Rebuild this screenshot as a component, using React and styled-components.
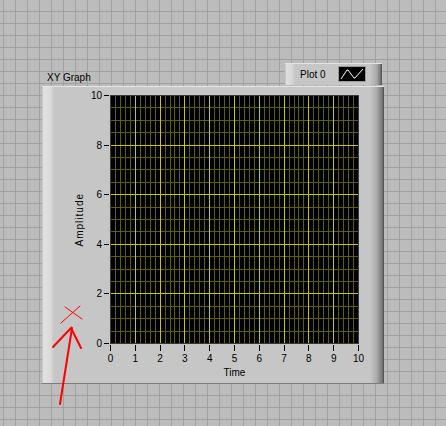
import React from 'react';
import styled, { createGlobalStyle } from 'styled-components';

const GlobalStyle = createGlobalStyle`
  html, body {
    margin: 0;
    padding: 0;
  }
  body {
    width: 446px;
    height: 426px;
    overflow: hidden;
    background-color: #bcbcbc;
    background-image:
      linear-gradient(#a0a0a0 1px, transparent 1px),
      linear-gradient(90deg, #a0a0a0 1px, transparent 1px);
    background-size: 12px 12px;
    background-position: 3px 11px;
    font-family: "Liberation Sans", Arial, sans-serif;
    font-size: 10px;
    color: #000;
  }
`;

const Page = styled.div`
  position: relative;
  width: 446px;
  height: 426px;
  padding: 63px 0 0 42px;
  box-sizing: border-box;
`;

const Control = styled.div`
  width: 342px;
  display: flex;
  flex-direction: column;
`;

const Header = styled.div`
  height: 23px;
  display: flex;
  justify-content: space-between;
  align-items: flex-start;
`;

const Caption = styled.span`
  margin: 9px 0 0 5px;
  line-height: 11px;
`;

const Legend = styled.div`
  width: 97px;
  height: 22px;
  margin-right: 2px;
  box-sizing: border-box;
  display: flex;
  align-items: center;
  padding-left: 15px;
  background: linear-gradient(to right, #b0b0b0 0px, #e0e0e0 1px, #d6d6d6 7px, #c6c6c6 10px,
    #c6c6c6 calc(100% - 12px), #a6a6a6 calc(100% - 5px), #6a6a6a calc(100% - 1px), #444 100%);
  box-shadow: inset 0 1px 0 #e4e4e4;
`;

const LegendName = styled.span`
  width: 38px;
  line-height: 11px;
`;

const LegendIcon = styled.svg`
  display: block;
  width: 28px;
  height: 16px;
  background: #000;
  box-sizing: border-box;
  border: 1px solid #9a9a9a;
`;

const Frame = styled.div`
  height: 298px;
  box-sizing: border-box;
  display: flex;
  padding: 9px 0 0 30px;
  background: linear-gradient(to right, #acacac 0px, #e2e2e2 1px, #d9d9d9 9px, #c6c6c6 12px,
    #c6c6c6 calc(100% - 14px), #a9a9a9 calc(100% - 7px), #6c6c6c calc(100% - 1px), #3e3e3e 100%);
  box-shadow: inset 0 1px 0 #e6e6e6, inset 0 -1px 0 #7c7c7c;
`;

const YTitle = styled.div`
  width: 16px;
  height: 249px;
  display: flex;
  align-items: center;
  justify-content: center;
`;

const YTitleText = styled.span`
  writing-mode: vertical-rl;
  transform: rotate(180deg);
  line-height: 12px;
  letter-spacing: 1px;
`;

const YAxis = styled.div`
  width: 22px;
  height: 249px;
  display: flex;
  flex-direction: column;
  justify-content: space-between;
  padding: 0.5px 0;
  box-sizing: border-box;
`;

const YTick = styled.div`
  height: 0;
  display: flex;
  align-items: center;
  justify-content: flex-end;
`;

const YTickMark = styled.span`
  width: 5px;
  height: 1px;
  margin: 0 1px 0 2px;
  background: #000;
`;

const PlotColumn = styled.div`
  width: 249px;
  display: flex;
  flex-direction: column;
`;

const Plot = styled.svg`
  display: block;
  width: 249px;
  height: 249px;
  background: #000;
`;

const XAxis = styled.div`
  display: flex;
  justify-content: space-between;
  padding: 0 0.5px;
  height: 18px;
`;

const XTick = styled.div`
  width: 0;
  display: flex;
  flex-direction: column;
  align-items: center;
`;

const XTickMark = styled.span`
  width: 1px;
  height: 6px;
  margin-top: 1px;
  flex: none;
  background: #000;
`;

const XTickLabel = styled.span`
  margin-top: 3px;
  line-height: 9px;
`;

const XTitle = styled.div`
  text-align: center;
  line-height: 11px;
  margin-top: 5px;
`;

const Annotation = styled.svg`
  position: absolute;
  left: 0;
  top: 0;
  pointer-events: none;
`;

const ticks = [0, 1, 2, 3, 4, 5, 6, 7, 8, 9, 10];

const PlotGrid = () => {
  const minor = [];
  const major = [];
  for (let i = 1; i < 50; i++) {
    const x = Math.round((i * 248) / 50) + 0.5;
    (i % 5 === 0 ? major : minor).push(<line key={'v' + i} x1={x} y1={0} x2={x} y2={249} />);
  }
  for (let j = 1; j < 20; j++) {
    const y = Math.round((j * 248) / 20) + 0.5;
    (j % 4 === 0 ? major : minor).push(<line key={'h' + j} x1={0} y1={y} x2={249} y2={y} />);
  }
  return (
    <Plot viewBox="0 0 249 249">
      <g stroke="#5f5f00" strokeWidth="1">{minor}</g>
      <g stroke="#c8c800" strokeWidth="1">{major}</g>
      <rect x="0.5" y="0.5" width="248" height="248" fill="none" stroke="#3a3a3a" />
    </Plot>
  );
};

export default function App() {
  return (
    <Page>
      <GlobalStyle />
      <Control>
        <Header>
          <Caption>XY Graph</Caption>
          <Legend>
            <LegendName>Plot 0</LegendName>
            <LegendIcon viewBox="0 0 26 14">
              <polyline points="2,12 8,3 9,3 15,11 16,11 24,2" fill="none" stroke="#fff" strokeWidth="1" />
            </LegendIcon>
          </Legend>
        </Header>
        <Frame>
          <YTitle>
            <YTitleText>Amplitude</YTitleText>
          </YTitle>
          <YAxis>
            {[...ticks].reverse().filter((t) => t % 2 === 0).map((t) => (
              <YTick key={t}>
                <span>{t}</span>
                <YTickMark />
              </YTick>
            ))}
          </YAxis>
          <PlotColumn>
            <PlotGrid />
            <XAxis>
              {ticks.map((t) => (
                <XTick key={t}>
                  <XTickMark />
                  <XTickLabel>{t}</XTickLabel>
                </XTick>
              ))}
            </XAxis>
            <XTitle>Time</XTitle>
          </PlotColumn>
        </Frame>
      </Control>
      <Annotation width="446" height="426" viewBox="0 0 446 426">
        <g stroke="#ff0000" fill="none" strokeLinecap="round">
          <line x1="65" y1="307" x2="82" y2="319" strokeWidth="1" />
          <line x1="61" y1="323" x2="80" y2="306" strokeWidth="1" />
          <polyline points="60,404 72,328" strokeWidth="2" />
          <polyline points="53,347 71,328 81,348" strokeWidth="2" />
        </g>
      </Annotation>
    </Page>
  );
}
